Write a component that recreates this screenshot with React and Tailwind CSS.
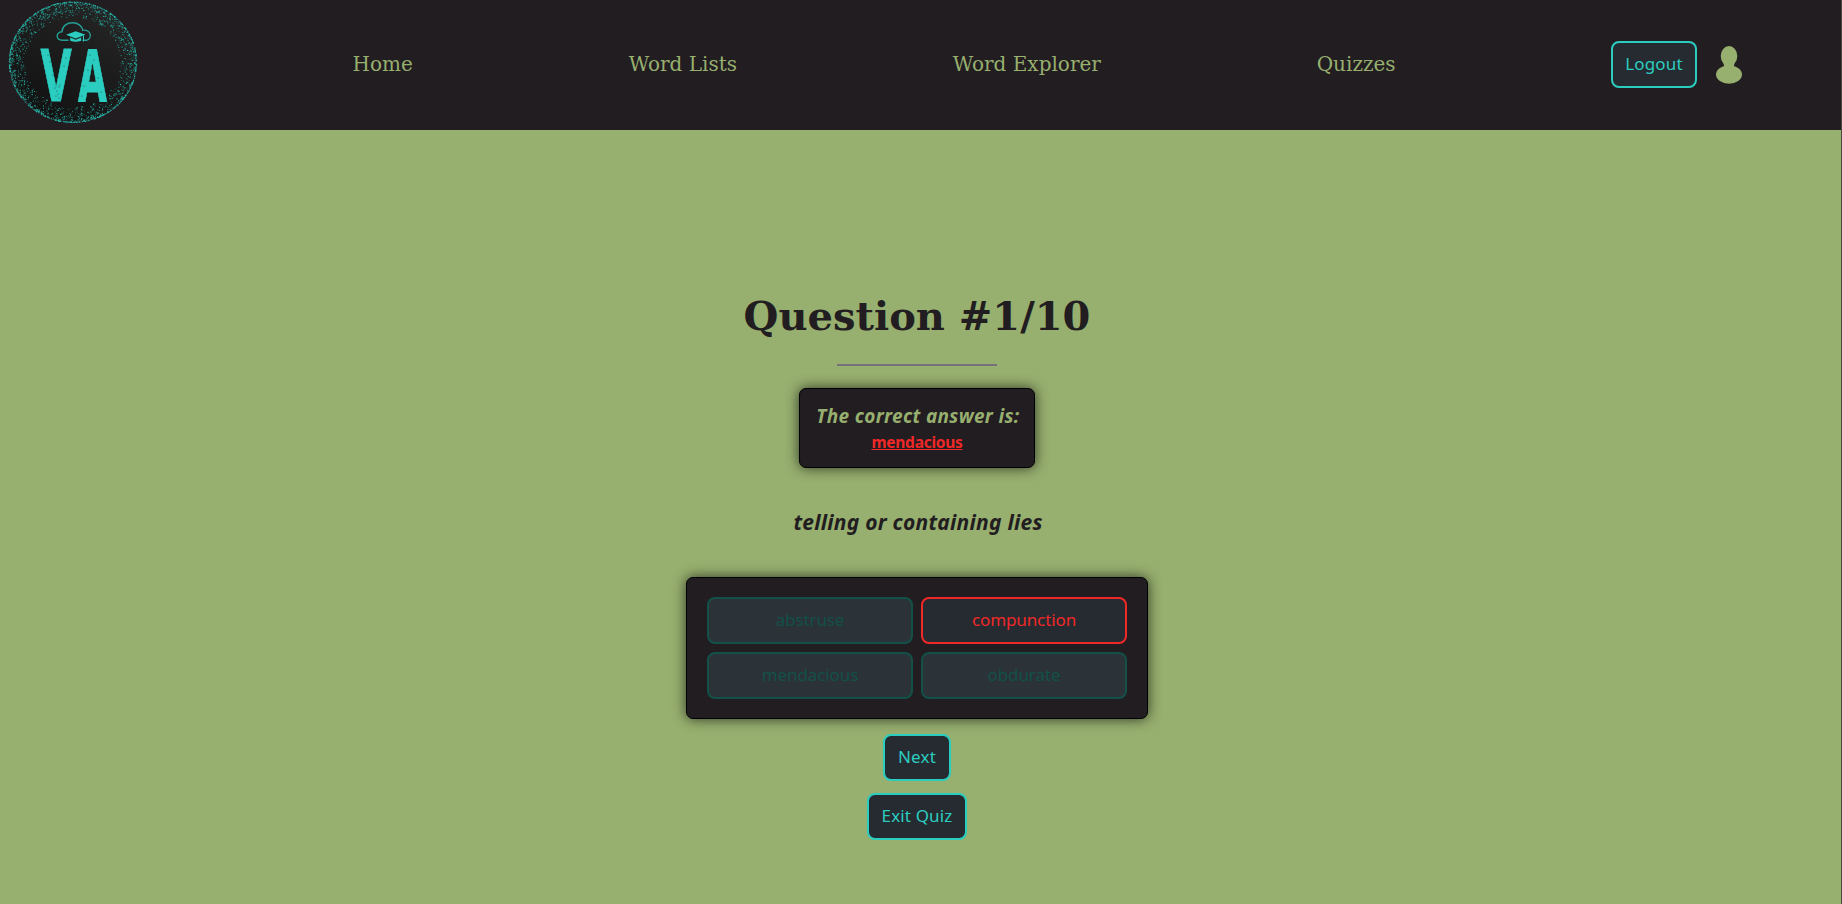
const SANS = "font-['Noto_Sans',sans-serif]";

function makeDots() {
  let seed = 77;
  const rnd = () => {
    seed = (seed * 1664525 + 1013904223) % 4294967296;
    return seed / 4294967296;
  };
  const dots = [];
  for (let i = 0; i < 2300; i++) {
    const angle = rnd() * Math.PI * 2;
    const depth = Math.pow(rnd(), 3) * 0.25;
    const r = 1 - depth;
    dots.push({
      x: 73 + Math.cos(angle) * 63.7 * r,
      y: 62.2 + Math.sin(angle) * 60.3 * r,
      s: 0.3 + rnd() * 0.4,
      o: 0.4 + rnd() * 0.5,
    });
  }
  return dots;
}

const dots = makeDots();

const wear = [
  [55, 88], [57, 91], [59, 87], [58, 94], [56, 96], [60, 85], [48, 55], [50, 62], [64, 66], [66, 58],
  [53, 75], [90, 55], [94, 60], [88, 70], [98, 78], [84, 86], [101, 92], [82, 96], [92, 66], [59, 98],
];

function Logo() {
  return (
    <svg className="h-[130px] w-[150px] shrink-0" viewBox="0 0 150 130">
      <defs>
        <linearGradient id="disc" x1="0.2" y1="1" x2="0.8" y2="0">
          <stop offset="0" stopColor="#111111" />
          <stop offset="0.5" stopColor="#1b1b1b" />
          <stop offset="1" stopColor="#262626" />
        </linearGradient>
      </defs>
      <ellipse cx="73" cy="62.2" rx="62" ry="59" fill="url(#disc)" />
      {dots.map((d, i) => (
        <circle key={i} cx={d.x} cy={d.y} r={d.s} fill="#2bc4b6" opacity={d.o} />
      ))}
      <path
        d="M68 40.3H62.5C55.5 40.3 55.5 31.8 62 31.8C62 26 67 22.8 72.5 22.8C78 22.8 82 26 82.7 30.2C91.5 29.5 92.5 38.5 86.5 40.3H83"
        fill="none"
        stroke="#259e95"
        strokeWidth="1.4"
        strokeLinecap="round"
      />
      <path d="M66 34.8L75.7 31.3L85.5 34.8L75.7 38.6Z" fill="#2bcdc0" />
      <path d="M70.2 37.6V40.7Q75.7 43 81.2 40.7V37.6L75.7 39.8Z" fill="#2bcdc0" />
      <path d="M83.5 35.5V41.5" stroke="#2bcdc0" strokeWidth="1" />
      <g fill="#2bcdc0" stroke="#2bcdc0" strokeWidth="1" fontFamily="DejaVu Sans" fontWeight="700" fontSize="72">
        <text transform="translate(40.6 101.2) scale(0.56 1)">V</text>
        <text transform="translate(78 101.2) scale(0.52 1)">A</text>
      </g>
      {wear.map(([x, y], i) => (
        <circle key={i} cx={x} cy={y} r="0.55" fill="#17504b" />
      ))}
    </svg>
  );
}

function Button({ children, className = "" }) {
  return (
    <button
      className={`flex h-[47px] items-center justify-center whitespace-nowrap rounded-[8px] border-2 border-[#2bcdc0] bg-[#262b31] pb-[1px] text-[17px] tracking-[0.15px] text-[#2bcdc0] ${className}`}
    >
      {children}
    </button>
  );
}

function Option({ children, chosen }) {
  return (
    <button
      className={`flex h-[47px] items-center justify-center rounded-[8px] border-2 pb-[1px] text-[17px] tracking-[-0.1px] ${
        chosen ? "border-[#f02828] bg-[#262b31] text-[#f02828]" : "border-[#125048] bg-[#2b3238] text-[#125048]"
      }`}
    >
      {children}
    </button>
  );
}

export default function App() {
  return (
    <div className={`flex h-[904px] w-full flex-col border-r border-[#4a4844] bg-[#97af6f] text-[#221d20] ${SANS}`}>
      <header className="flex h-[130px] shrink-0 items-center bg-[#221d20] font-['DejaVu_Serif',serif] text-[20px] text-[#97af6f]">
        <Logo />
        <nav className="ml-[202.6px] flex w-[1043px] justify-between pb-[2px] whitespace-nowrap">
          <a>Home</a>
          <a>Word Lists</a>
          <a>Word Explorer</a>
          <a>Quizzes</a>
        </nav>
        <div className={`ml-[215.4px] flex items-center gap-[19px] pb-[1px] ${SANS}`}>
          <Button className="w-[86px]">Logout</Button>
          <svg className="h-[38px] w-[26px]" viewBox="0 0 26 38" fill="#97af6f">
            <ellipse cx="13" cy="10" rx="8.3" ry="10" />
            <ellipse cx="13" cy="28.5" rx="13" ry="9.2" />
            <path d="M7 15L8.5 22H17.5L19 15Z" />
          </svg>
        </div>
      </header>
      <main className="flex w-[1834px] flex-col items-center">
        <h1 className="mt-[162px] font-['DejaVu_Serif',serif] text-[40px] leading-[48px] font-bold">Question #1/10</h1>
        <hr className="mt-[24px] h-[2px] w-[160px] border-0 bg-[#75707b]" />
        <section className="mt-[22px] flex h-[80px] w-[236px] flex-col items-center rounded-[7px] border border-black bg-[#221d20] pt-[13px] shadow-[0_0_13px_rgba(0,0,0,0.7)]">
          <h2 className="pl-[2px] text-[19px] leading-[28px] font-bold tracking-[0.33px] whitespace-nowrap text-[#97af6f] italic">The correct answer is:</h2>
          <p className="text-[15.5px] leading-[25px] font-bold tracking-[-0.25px] text-[#f02828] underline">mendacious</p>
        </section>
        <p className="mt-[39px] pl-[2px] text-[21px] leading-[30px] font-bold tracking-[0.25px] italic">telling or containing lies</p>
        <section className="mt-[40px] grid h-[142px] w-[462px] grid-cols-2 content-center gap-[8px] rounded-[7px] border border-black bg-[#221d20] px-[20px] shadow-[0_0_13px_rgba(0,0,0,0.7)]">
          <Option>abstruse</Option>
          <Option chosen>compunction</Option>
          <Option>mendacious</Option>
          <Option>obdurate</Option>
        </section>
        <Button className="mt-[15px] w-[68px]">Next</Button>
        <Button className="mt-[12px] w-[100px]">Exit Quiz</Button>
      </main>
    </div>
  );
}
